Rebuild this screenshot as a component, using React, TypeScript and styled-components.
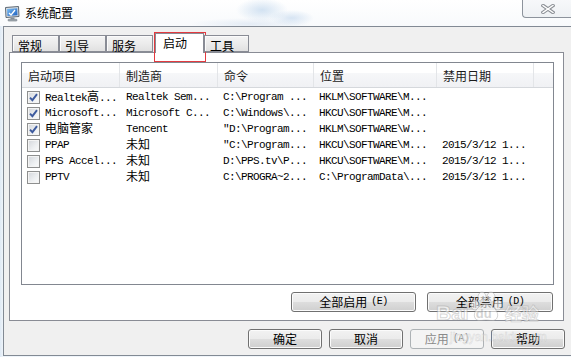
import React from "react";
import styled, { createGlobalStyle } from "styled-components";

const GlobalStyle = createGlobalStyle`
  html, body {
    margin: 0;
    padding: 0;
    background: #ffffff;
  }
  body {
    font-family: "Noto Sans CJK SC", "Liberation Sans", sans-serif;
    font-size: 12px;
    color: #000;
  }
`;

const UI_FONT = `"Noto Sans CJK SC", "Liberation Sans", sans-serif`;

const Window = styled.div`
  position: relative;
  width: 571px;
  height: 357px;
  overflow: hidden;
  background: linear-gradient(90deg, #dfeaf5 0px, #eef4fa 3px, #f6f9fc 100%);
`;

const TitleBar = styled.div`
  height: 26px;
  display: flex;
  align-items: center;
  padding-left: 4px;
  background:
    radial-gradient(ellipse 26px 12px at 262px 10px, rgba(176, 204, 232, 0.55), transparent),
    radial-gradient(ellipse 22px 8px at 292px 18px, rgba(190, 212, 236, 0.6), transparent),
    radial-gradient(ellipse 60px 6px at 250px 24px, rgba(214, 226, 240, 0.6), transparent),
    linear-gradient(180deg, #ffffff 0%, #f8fafc 100%);
`;

const Title = styled.span`
  margin-left: 4px;
  font-size: 12px;
  line-height: 16px;
  color: #000;
  text-shadow: 0 0 6px #fff, 0 0 3px #fff;
`;

const CloseButton = styled.div`
  align-self: flex-start;
  margin-left: auto;
  width: 46px;
  height: 17px;
  border: 1px solid #8d939c;
  border-top: none;
  border-right: none;
  border-radius: 0 0 0 4px;
  background: linear-gradient(180deg, #f7f8fa 0%, #eef1f4 100%);
  display: flex;
  align-items: center;
  justify-content: center;
  padding-left: 2px;
`;

const Client = styled.div`
  margin-left: 3px;
  width: 600px;
  height: 330px;
  box-sizing: border-box;
  border: 1px solid #828a94;
  border-right: none;
  background: #f0f0f0;
  display: flex;
  flex-direction: column;
`;

const TabStrip = styled.div`
  height: 25px;
  display: flex;
  align-items: flex-end;
  padding-left: 8px;
  position: relative;
  z-index: 2;
`;

const Tab = styled.div<{ $w: number; $active?: boolean }>`
  position: relative;
  box-sizing: border-box;
  width: ${(p) => p.$w}px;
  height: ${(p) => (p.$active ? 20 : 17)}px;
  margin-bottom: ${(p) => (p.$active ? -1 : 0)}px;
  margin-left: ${(p) => (p.$active ? 2 : 0)}px;
  padding: ${(p) => (p.$active ? "1px 0 0 7px" : "2px 0 0 5px")};
  border: 1px solid #898c95;
  border-bottom: ${(p) => (p.$active ? "none" : "1px solid #898c95")};
  background: ${(p) =>
    p.$active
      ? "#ffffff"
      : "linear-gradient(180deg, #f4f4f4 0%, #ececec 50%, #e1e1e1 100%)"};
  box-shadow: ${(p) => (p.$active ? "none" : "inset 1px 1px 0 #fbfbfb")};
  font-size: 12px;
  line-height: 15px;
  white-space: nowrap;
`;

const Highlight = styled.div`
  position: absolute;
  left: -2px;
  top: -2px;
  width: 52px;
  height: 30px;
  box-sizing: border-box;
  border: 1.5px solid #e23a3f;
  pointer-events: none;
`;

const Panel = styled.div`
  margin-left: 5px;
  width: 555px;
  height: 269px;
  box-sizing: border-box;
  border: 1px solid #898c95;
  background: #ffffff;
  padding: 9px 10px 8px 11px;
  display: flex;
  flex-direction: column;
`;

const ListView = styled.div`
  width: 533px;
  height: 223px;
  box-sizing: border-box;
  border: 1px solid #828790;
  background: #ffffff;
  display: flex;
  flex-direction: column;
`;

const Header = styled.div`
  height: 25px;
  box-sizing: border-box;
  display: flex;
  border-bottom: 1px solid #d5d8dc;
`;

const HeadCell = styled.div<{ $w?: number }>`
  box-sizing: border-box;
  width: ${(p) => (p.$w ? `${p.$w}px` : "auto")};
  flex: ${(p) => (p.$w ? "none" : "1")};
  padding: 2px 0 0 6px;
  border-right: ${(p) => (p.$w ? "1px solid #e3e5e8" : "none")};
  box-shadow: ${(p) => (p.$w ? "1px 0 0 #ffffff" : "none")};
  background: linear-gradient(180deg, #ffffff 0%, #ffffff 42%, #f6f7f9 43%, #f0f1f4 100%);
  font-family: ${UI_FONT};
  font-size: 12px;
  line-height: 22px;
  color: #1b1b1b;
  white-space: nowrap;
`;

const Rows = styled.div`
  padding-top: 1px;
  display: flex;
  flex-direction: column;
`;

const Row = styled.div`
  height: 16px;
  display: flex;
  align-items: center;
`;

const Cell = styled.div<{ $w: number; $pad: number }>`
  box-sizing: border-box;
  width: ${(p) => p.$w}px;
  padding-left: ${(p) => p.$pad}px;
  display: flex;
  align-items: center;
  gap: 5px;
  overflow: hidden;
  white-space: nowrap;
  font-family: "Liberation Mono", "Noto Sans CJK SC", monospace;
  font-size: 11px;
  letter-spacing: -0.6px;
  line-height: 16px;
  color: #000;
`;

const Han = styled.span`
  font-family: ${UI_FONT};
  font-size: 12px;
  letter-spacing: 0;
`;

const Check = styled.span<{ $on: boolean }>`
  flex: none;
  width: 13px;
  height: 13px;
  box-sizing: border-box;
  border: 1px solid #8e8f8f;
  background: linear-gradient(135deg, #d3d6db 0%, #eef0f2 60%, #fbfbfb 100%);
  box-shadow: inset 0 0 0 1px #f4f4f4;
  display: flex;
  align-items: center;
  justify-content: center;
`;

const PanelButtons = styled.div`
  margin-top: 7px;
  display: flex;
  justify-content: flex-end;
  gap: 11px;
`;

const DialogButtons = styled.div`
  margin: 8px 0 0 5px;
  width: 556px;
  display: flex;
  justify-content: flex-end;
  gap: 7px;
`;

const Button = styled.div<{ $w: number; $disabled?: boolean }>`
  box-sizing: border-box;
  width: ${(p) => p.$w}px;
  height: 20px;
  border: 1px solid ${(p) => (p.$disabled ? "#adb2b5" : "#707070")};
  border-radius: 3px;
  background: ${(p) =>
    p.$disabled
      ? "#f4f4f4"
      : "linear-gradient(180deg, #f2f2f2 0%, #ebebeb 48%, #dddddd 52%, #cfcfcf 100%)"};
  box-shadow: inset 0 0 0 1px ${(p) => (p.$disabled ? "#f4f4f4" : "#fbfbfb")};
  display: flex;
  align-items: center;
  justify-content: center;
  font-family: ${UI_FONT};
  font-size: 12px;
  line-height: 16px;
  color: ${(p) => (p.$disabled ? "#8a8a8a" : "#000")};
  white-space: nowrap;
`;

const Key = styled.span`
  margin-left: 4px;
  font-family: "Liberation Mono", monospace;
  font-size: 10px;
  letter-spacing: -0.5px;
`;

const Watermark = styled.div`
  position: absolute;
  left: 436px;
  top: 291px;
  display: flex;
  flex-direction: column;
  align-items: flex-start;
  pointer-events: none;
  opacity: 0.7;
`;

const MarkLine = styled.div`
  display: flex;
  align-items: flex-end;
  height: 32px;
`;

const Bai = styled.span`
  font-family: "Liberation Sans", sans-serif;
  font-weight: bold;
  font-size: 21px;
  line-height: 20px;
  color: rgba(255, 255, 255, 0.85);
  -webkit-text-stroke: 1px rgba(150, 150, 150, 0.55);
`;

const Jingyan = styled.span`
  margin-left: 2px;
  font-family: ${UI_FONT};
  font-weight: bold;
  font-size: 17px;
  line-height: 20px;
  color: rgba(255, 255, 255, 0.85);
  -webkit-text-stroke: 0.8px rgba(150, 150, 150, 0.55);
`;

const Paw = styled.span`
  position: relative;
  width: 34px;
  height: 32px;
  display: inline-block;
`;

const PawText = styled.span`
  position: absolute;
  left: 7px;
  bottom: 2px;
  font-family: "Liberation Sans", sans-serif;
  font-weight: bold;
  font-size: 13px;
  color: rgba(170, 170, 170, 0.7);
`;

const Url = styled.span`
  margin: 7px 0 0 14px;
  font-family: "Liberation Sans", sans-serif;
  font-size: 12px;
  color: rgba(255, 255, 255, 0.9);
  -webkit-text-stroke: 0.5px rgba(160, 160, 160, 0.5);
`;

const columns = [
  { title: "启动项目", w: 98 },
  { title: "制造商", w: 98 },
  { title: "命令", w: 96 },
  { title: "位置", w: 123 },
  { title: "禁用日期", w: 97 },
];

const rows = [
  { on: true, cells: ["Realtek高...", "Realtek Sem...", "C:\\Program ...", "HKLM\\SOFTWARE\\M...", ""] },
  { on: true, cells: ["Microsoft...", "Microsoft C...", "C:\\Windows\\...", "HKCU\\SOFTWARE\\M...", ""] },
  { on: true, cells: ["电脑管家", "Tencent", "\"D:\\Program...", "HKLM\\SOFTWARE\\W...", ""] },
  { on: false, cells: ["PPAP", "未知", "\"C:\\Program...", "HKCU\\SOFTWARE\\M...", "2015/3/12 1..."] },
  { on: false, cells: ["PPS Accel...", "未知", "D:\\PPS.tv\\P...", "HKCU\\SOFTWARE\\M...", "2015/3/12 1..."] },
  { on: false, cells: ["PPTV", "未知", "C:\\PROGRA~2...", "C:\\ProgramData\\...", "2015/3/12 1..."] },
];

const pads = [5, 6, 5, 5, 5];

// CJK runs get the UI font, the rest stays monospaced
const mixed = (s: string) =>
  s
    .split(/([\u4e00-\u9fff]+)/)
    .filter(Boolean)
    .map((part, i) => (/[\u4e00-\u9fff]/.test(part) ? <Han key={i}>{part}</Han> : part));

function AppIcon() {
  return (
    <svg width="17" height="17" viewBox="0 0 17 17">
      <defs>
        <linearGradient id="scr" x1="0" y1="0" x2="1" y2="1">
          <stop offset="0" stopColor="#7ec0f4" />
          <stop offset="1" stopColor="#1d5fbf" />
        </linearGradient>
      </defs>
      <path d="M1.5 2.5 L14.5 1.5 L15 11.5 L2 12.5 Z" fill="#d7dde4" stroke="#5d6873" />
      <path d="M3 4 L13.2 3.2 L13.5 10.2 L3.4 11 Z" fill="url(#scr)" />
      <path d="M5 8 L7 10 L11 5" stroke="#ffffff" strokeWidth="1.3" fill="none" />
      <rect x="6.5" y="12.5" width="4" height="2" fill="#8a939c" />
      <rect x="4" y="14.2" width="9" height="1.8" rx="0.8" fill="#a7afb7" stroke="#6c757e" strokeWidth="0.6" />
    </svg>
  );
}

function CloseGlyph() {
  return (
    <svg width="14" height="10" viewBox="0 0 14 10">
      <path d="M2 1.5 L12 8.5 M12 1.5 L2 8.5" stroke="#8b8f95" strokeWidth="3.4" strokeLinecap="square" />
      <path d="M2 1.5 L12 8.5 M12 1.5 L2 8.5" stroke="#ffffff" strokeWidth="1.4" strokeLinecap="square" />
    </svg>
  );
}

function CheckMark() {
  return (
    <svg width="9" height="9" viewBox="0 0 9 9">
      <path d="M1 4.6 L3.4 7.2 L8 1.2" stroke="#3d5a9e" strokeWidth="1.9" fill="none" />
    </svg>
  );
}

function PawShape() {
  return (
    <svg width="34" height="32" viewBox="0 0 34 32">
      <g fill="rgba(255,255,255,0.85)" stroke="rgba(150,150,150,0.55)" strokeWidth="1">
        <ellipse cx="6" cy="14" rx="4" ry="5" />
        <ellipse cx="13" cy="6" rx="4" ry="5" />
        <ellipse cx="22" cy="6" rx="4" ry="5" />
        <ellipse cx="29" cy="14" rx="4" ry="5" />
        <path d="M17 13 C24 13 31 22 28 27 C26 31 21 29 17 29 C13 29 8 31 6 27 C3 22 10 13 17 13 Z" />
      </g>
    </svg>
  );
}

export default function App() {
  return (
    <Window>
      <GlobalStyle />
      <TitleBar>
        <AppIcon />
        <Title>系统配置</Title>
        <CloseButton>
          <CloseGlyph />
        </CloseButton>
      </TitleBar>

      <Client>
        <TabStrip>
          <Tab $w={47}>常规</Tab>
          <Tab $w={47}>引导</Tab>
          <Tab $w={47}>服务</Tab>
          <Tab $w={49} $active>
            启动
            <Highlight />
          </Tab>
          <Tab $w={45}>工具</Tab>
        </TabStrip>

        <Panel>
          <ListView>
            <Header>
              {columns.map((c) => (
                <HeadCell key={c.title} $w={c.w}>
                  {c.title}
                </HeadCell>
              ))}
              <HeadCell />
            </Header>
            <Rows>
              {rows.map((r, ri) => (
                <Row key={ri}>
                  {r.cells.map((text, ci) => (
                    <Cell key={ci} $w={columns[ci].w} $pad={pads[ci]}>
                      {ci === 0 && <Check $on={r.on}>{r.on && <CheckMark />}</Check>}
                      <span>{mixed(text)}</span>
                    </Cell>
                  ))}
                </Row>
              ))}
            </Rows>
          </ListView>

          <PanelButtons>
            <Button $w={125}>
              全部启用<Key>(E)</Key>
            </Button>
            <Button $w={126}>
              全部禁用<Key>(D)</Key>
            </Button>
          </PanelButtons>
        </Panel>

        <DialogButtons>
          <Button $w={74}>确定</Button>
          <Button $w={74}>取消</Button>
          <Button $w={74} $disabled>
            应用<Key>(A)</Key>
          </Button>
          <Button $w={74}>帮助</Button>
        </DialogButtons>
      </Client>

      <Watermark>
        <MarkLine>
          <Bai>Bai</Bai>
          <Paw>
            <PawShape />
            <PawText>du</PawText>
          </Paw>
          <Jingyan>经验</Jingyan>
        </MarkLine>
        <Url>jingyan.baidu.com</Url>
      </Watermark>
    </Window>
  );
}
